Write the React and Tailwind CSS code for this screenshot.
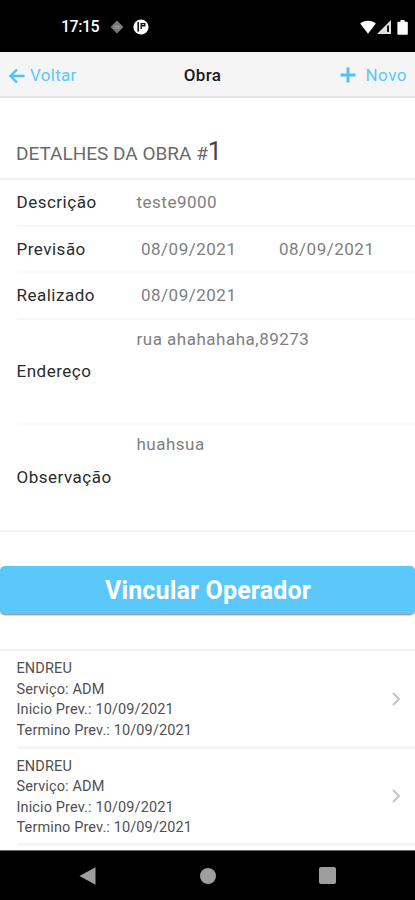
const operators = [
  { id: 1, name: 'ENDREU', service: 'ADM', start: '10/09/2021', end: '10/09/2021' },
  { id: 2, name: 'ENDREU', service: 'ADM', start: '10/09/2021', end: '10/09/2021' },
];

function StatusBar() {
  return (
    <div className="flex h-[52px] shrink-0 items-center justify-between bg-black pl-[61px] pr-[7px] pt-[2px]">
      <div className="flex items-center">
        <span className="w-[49px] whitespace-nowrap text-[16px] font-medium leading-none tracking-[-0.5px] text-white">
          17:15
        </span>
        <svg className="h-[14px] w-[14px]" viewBox="0 0 14 14">
          <path d="M7 0.5 13.5 7 7 13.5 0.5 7Z" fill="#777" />
          <path d="M3.5 6.2h7M3.5 8h7" stroke="#aaa" strokeWidth="0.8" />
        </svg>
        <svg className="ml-[9px] h-[16px] w-[16px]" viewBox="0 0 16 16">
          <circle cx="8" cy="8" r="7.6" fill="#fff" />
          <path d="M5.2 3v9.5" stroke="#111" strokeWidth="1.6" />
          <path d="M8.2 10V4.6h3.6v2.2H8.8" fill="none" stroke="#111" strokeWidth="1.4" />
        </svg>
      </div>
      <div className="flex items-center">
        <svg className="h-[14px] w-[16px]" viewBox="0 0 16 14">
          <path d="M8 13.8 0.2 3.4C4.2-.2 11.8-.2 15.8 3.4Z" fill="#fff" />
        </svg>
        <svg className="ml-px h-[14px] w-[14px]" viewBox="0 0 14 14">
          <path d="M0 14 14 0V14Z" fill="#ddd" />
          <path d="M11 5.5v6.5" stroke="#000" strokeWidth="1.8" />
        </svg>
        <svg className="ml-[6px] h-[15px] w-[11px]" viewBox="0 0 11 15">
          <path d="M3.5 0h4v1.8H10a.8.8 0 0 1 .8.8V14a.8.8 0 0 1-.8.8H1.2a.8.8 0 0 1-.8-.8V2.6a.8.8 0 0 1 .8-.8h2.3Z" fill="#fff" />
        </svg>
      </div>
    </div>
  );
}

function Header() {
  return (
    <header className="grid h-[46px] shrink-0 grid-cols-[133px_1fr_133px] items-center border-b-2 border-[#e4e4e4] bg-[#f5f5f5] pl-[9px] pr-[8px] pt-[3px] text-[17px] text-[#5ac8fa]">
      <button className="flex items-center">
        <svg className="mr-[5px] h-[16px] w-[16px]" viewBox="0 0 16 16">
          <path d="M8 1.5 1.5 8 8 14.5M1.8 8H15.6" fill="none" stroke="#4fc3f7" strokeWidth="2.4" />
        </svg>
        <span className="tracking-[0.3px]">Voltar</span>
      </button>
      <h1 className="pr-[11px] text-center font-medium tracking-[0.4px] text-[#1a1a1a]">Obra</h1>
      <button className="flex items-center justify-end">
        <svg className="mb-[2px] mr-[9px] h-[16px] w-[16px]" viewBox="0 0 16 16">
          <path d="M8 0.5V15.5M0.5 8H15.5" stroke="#4fc3f7" strokeWidth="3" />
        </svg>
        <span className="tracking-[0.5px]">Novo</span>
      </button>
    </header>
  );
}

function Row({ label, children }) {
  return (
    <div className="ml-[16.5px] flex h-[46.5px] items-center border-b-2 border-[#f8f8f8]">
      <span className="w-[120px] text-[#2b2b2b]">{label}</span>
      <div className="flex flex-1 text-[#808080]">{children}</div>
    </div>
  );
}

function TextRow({ label, value, last }) {
  return (
    <div
      className={
        last
          ? 'flex h-[107px] border-b-2 border-[#f3f3f3] pl-[16.5px]'
          : 'ml-[16.5px] flex h-[105px] border-b-2 border-[#f8f8f8]'
      }
    >
      <span className="w-[120px] self-center text-[#2b2b2b]">{label}</span>
      <span className="mt-[7px] text-[#808080]">{value}</span>
    </div>
  );
}

function OperatorItem({ operator }) {
  return (
    <li className="ml-[16.5px] flex h-[97.5px] items-center justify-between border-b-[3px] border-[#f5f5f5] pr-[14px] pt-px">
      <div className="pt-[3px] text-[14.5px] leading-[20.4px] tracking-[0.12px] text-[#505050]">
        <p>{operator.name}</p>
        <p>Serviço: {operator.service}</p>
        <p>Inicio Prev.: {operator.start}</p>
        <p>Termino Prev.: {operator.end}</p>
      </div>
      <svg className="h-[14px] w-[10px]" viewBox="0 0 10 14">
        <path d="M2 1 8 7 2 13" fill="none" stroke="#c4c4c4" strokeWidth="2" />
      </svg>
    </li>
  );
}

function NavBar() {
  return (
    <nav className="flex h-[50px] shrink-0 items-center justify-between border-t border-[#666] bg-black pl-[79px] pr-[79px]">
      <svg className="h-[18px] w-[17px]" viewBox="0 0 17 18">
        <path d="M0.5 9 16.5 0.3V17.7Z" fill="#9e9e9e" />
      </svg>
      <span className="h-[16px] w-[16px] rounded-full bg-[#9e9e9e]" />
      <span className="h-[17px] w-[17px] rounded-[2px] bg-[#9e9e9e]" />
    </nav>
  );
}

export default function App() {
  return (
    <div className="flex h-[900px] w-[415px] flex-col overflow-hidden bg-white font-['Roboto',sans-serif]">
      <StatusBar />
      <Header />

      <main className="min-h-0 flex-1 overflow-hidden">
        <h2 className="flex h-[82px] items-end border-b-2 border-[#efefef] pb-[9px] pl-4 text-[19px] leading-[30px] text-[#6a6a6a]">
          <span>
            DETALHES DA OBRA #<span className="text-[25px] text-[#444]">1</span>
          </span>
        </h2>

        <section className="text-[17px] leading-[24px] tracking-[0.5px]">
          <Row label="Descrição">teste9000</Row>
          <Row label="Previsão">
            <span className="w-[138px] pl-[4.5px]">08/09/2021</span>
            <span className="pl-[4.5px]">08/09/2021</span>
          </Row>
          <Row label="Realizado">
            <span className="pl-[4.5px]">08/09/2021</span>
          </Row>
          <TextRow label="Endereço" value="rua ahahahaha,89273" />
          <TextRow label="Observação" value="huahsua" last />
        </section>

        <button className="mt-[34.5px] h-[48px] w-full rounded-[5px] bg-[#5ac8fa] pl-px text-[25px] font-bold leading-none tracking-[0.15px] text-white shadow-[0_1px_2px_#777]">
          Vincular Operador
        </button>

        <ul className="mt-[35px] border-t-2 border-[#f3f3f3]">
          {operators.map((op) => (
            <OperatorItem key={op.id} operator={op} />
          ))}
        </ul>
      </main>

      <NavBar />
    </div>
  );
}
